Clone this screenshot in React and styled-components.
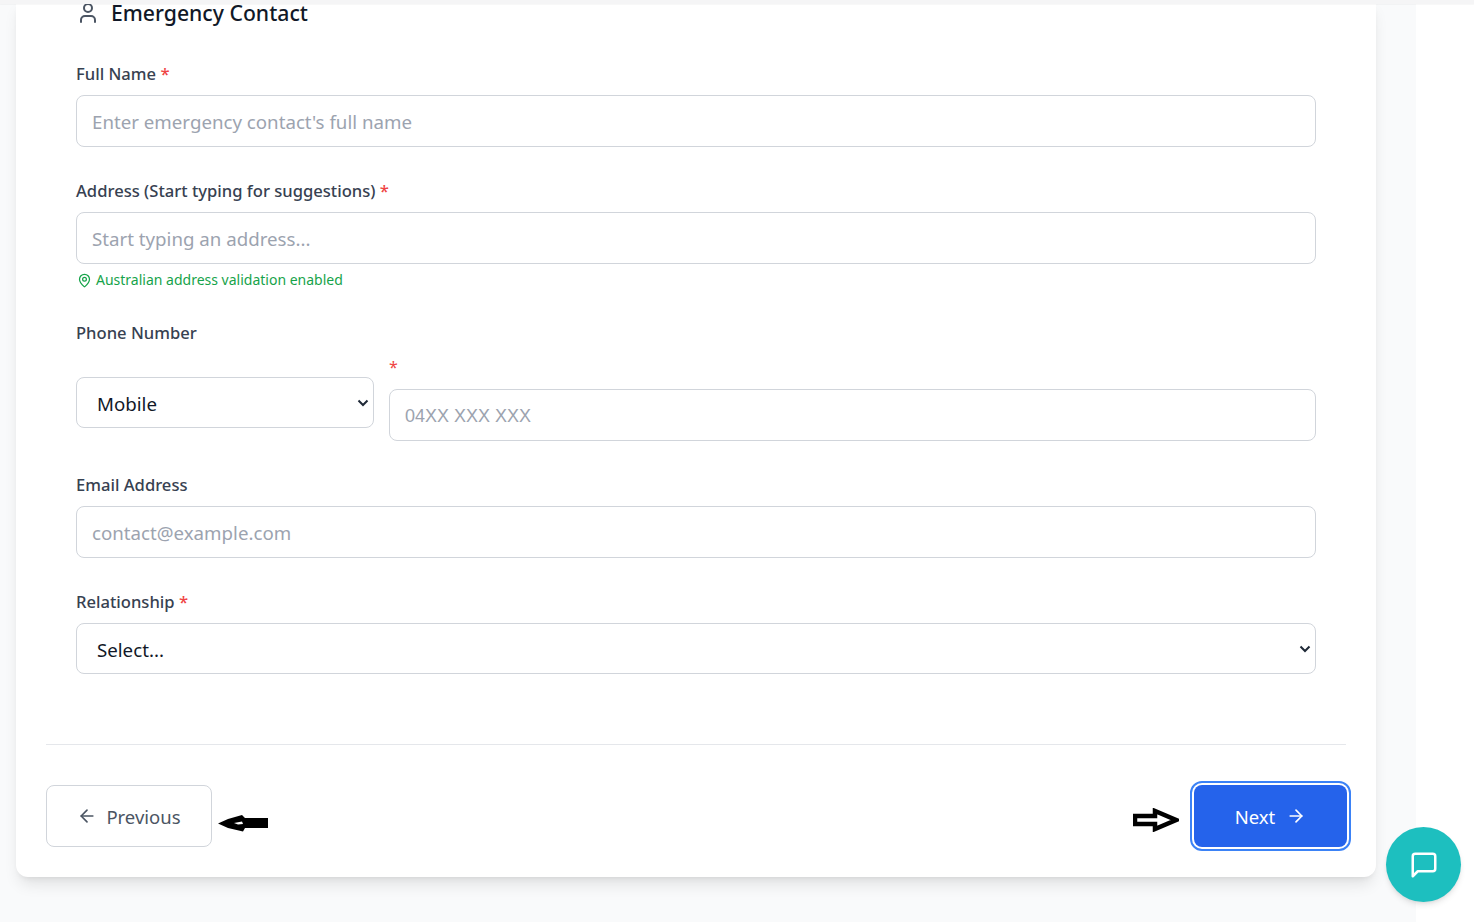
import React from "react";
import styled, { createGlobalStyle } from "styled-components";
import { User, MapPin, ArrowLeft, ArrowRight } from "lucide-react";

const Global = createGlobalStyle`
  html, body { margin: 0; padding: 0; background: #fff; height: 100%; overflow: hidden; }
  * { box-sizing: border-box; }
  body { font-family: "Noto Sans", "Open Sans", sans-serif; }
`;

const Page = styled.div`
  position: relative;
  height: 922px;
  overflow: hidden;
  background: #fff;
`;
const TopStrip = styled.div`
  position: absolute;
  inset: 0 0 auto 0;
  height: 4px;
  background: #f5f5f6;
  box-shadow: 0 1px 1px rgba(0, 0, 0, 0.03);
  z-index: 2;
`;
const Main = styled.main`
  width: 1416px;
  height: 100%;
  background: #f9fafb;
  padding: 0 40px 0 16px;
`;
const Card = styled.section`
  background: #fff;
  border-radius: 0 0 12px 12px;
  box-shadow: 0 10px 15px -3px rgba(0, 0, 0, 0.1), 0 4px 6px -4px rgba(0, 0, 0, 0.1);
  padding: 0 30px 30px;
  height: 877px;
`;
const FormBody = styled.div`
  padding: 0 30px;
`;
const Title = styled.h2`
  display: flex;
  align-items: center;
  gap: 11px;
  height: 26px;
  margin: 0 0 36px;
  color: #111827;
  font-size: 21.2px;
  font-weight: 500;
  line-height: 26px;
`;
const Field = styled.div`
  margin-bottom: ${(p) => p.$mb ?? 32}px;
`;
const Label = styled.label`
  display: block;
  color: #374151;
  font-size: 16.6px;
  font-weight: 500;
  line-height: 24px;
  margin-bottom: ${(p) => p.$mb ?? 9}px;
`;
const Star = styled.span`
  color: #ef4444;
`;
const TextInput = styled.input`
  display: block;
  width: 100%;
  height: 52px;
  border: 1px solid #d1d5db;
  border-radius: 8px;
  padding: ${(p) => (p.$arial ? "3px 15px 0" : "0 15px")};
  font-family: ${(p) => (p.$arial ? '"Liberation Sans", Arial, sans-serif' : "inherit")};
  font-size: ${(p) => (p.$arial ? 18 : 18.7)}px;
  color: #111827;
  background: #fff;
  outline: none;
  &::placeholder { color: #9ca3af; opacity: 1; }
`;
const chevron =
  "url(\"data:image/svg+xml,%3Csvg xmlns='http://www.w3.org/2000/svg' width='12' height='8' viewBox='0 0 12 8'%3E%3Cpath d='M1.5 1.5 6 6l4.5-4.5' fill='none' stroke='%231f2937' stroke-width='2'/%3E%3C/svg%3E\")";
const Select = styled.select`
  display: block;
  width: ${(p) => p.$w || "100%"};
  height: 51px;
  margin-bottom: ${(p) => p.$mb ?? 0}px;
  border: 1px solid #d1d5db;
  border-radius: 8px;
  padding: 2px 20px 0;
  font: inherit;
  font-size: 18.7px;
  color: #111827;
  appearance: none;
  background: #fff ${chevron} no-repeat right 4px center;
`;
const Hint = styled.div`
  display: flex;
  align-items: center;
  gap: 4px;
  margin-top: 6px;
  color: #16a34a;
  font-size: 14px;
  line-height: 20px;
  padding-left: 1px;
`;
const PhoneRow = styled.div`
  display: flex;
  align-items: flex-end;
  gap: 15px;
`;
const PhoneCol = styled.div`
  flex: 1;
`;
const StarLine = styled.div`
  height: 24px;
  line-height: 24px;
  font-size: 16px;
  margin-bottom: 10px;
`;
const Footer = styled.footer`
  position: relative;
  display: flex;
  justify-content: space-between;
  margin-top: 70px;
  padding-top: 40px;
  border-top: 1px solid #e5e7eb;
`;
const PrevButton = styled.button`
  display: flex;
  align-items: center;
  gap: 9px;
  width: 166px;
  height: 62px;
  justify-content: center;
  border: 1px solid #d1d5db;
  border-radius: 8px;
  background: #fff;
  color: #4b5563;
  font: inherit;
  font-size: 18.5px;
`;
const NextButton = styled.button`
  display: flex;
  align-items: center;
  justify-content: center;
  gap: 11px;
  width: 153px;
  height: 62px;
  margin-right: -1px;
  border: 0;
  border-radius: 8px;
  background: #2563eb;
  color: #fff;
  font: inherit;
  font-size: 18.5px;
  outline: 2px solid #3b82f6;
  outline-offset: 2px;
`;
const Mark = styled.svg`
  position: absolute;
  left: ${(p) => p.$x}px;
  top: ${(p) => p.$y}px;
`;
const ChatButton = styled.button`
  position: absolute;
  left: 1386px;
  top: 827px;
  width: 75px;
  height: 75px;
  border: 0;
  border-radius: 50%;
  background: #1dbfbf;
  color: #fff;
  display: flex;
  align-items: center;
  justify-content: center;
  box-shadow: 0 4px 6px -1px rgba(0, 0, 0, 0.1), 0 2px 4px -2px rgba(0, 0, 0, 0.1);
`;

export default function App() {
  return (
    <Page>
      <Global />
      <TopStrip />
      <Main>
        <Card>
          <FormBody>
            <Title>
              <User size={24} color="#4b5563" strokeWidth={2} />
              Emergency Contact
            </Title>
            <Field>
              <Label>Full Name <Star>*</Star></Label>
              <TextInput placeholder="Enter emergency contact's full name" />
            </Field>
            <Field $mb={31}>
              <Label>Address (Start typing for suggestions) <Star>*</Star></Label>
              <TextInput placeholder="Start typing an address..." />
              <Hint><MapPin size={15} />Australian address validation enabled</Hint>
            </Field>
            <Field>
              <Label $mb={10}>Phone Number</Label>
              <PhoneRow>
                <Select $w="298px" $mb={13} defaultValue="Mobile">
                  <option>Mobile</option>
                </Select>
                <PhoneCol>
                  <StarLine><Star>*</Star></StarLine>
                  <TextInput $arial placeholder="04XX XXX XXX" />
                </PhoneCol>
              </PhoneRow>
            </Field>
            <Field>
              <Label>Email Address</Label>
              <TextInput placeholder="contact@example.com" />
            </Field>
            <Field $mb={0}>
              <Label>Relationship <Star>*</Star></Label>
              <Select defaultValue="Select...">
                <option>Select...</option>
              </Select>
            </Field>
          </FormBody>
          <Footer>
            <PrevButton><ArrowLeft size={20} />Previous</PrevButton>
            <Mark $x={172} $y={70} width="50" height="17" viewBox="0 0 50 17">
              <path d="M0 8.5 L10 4 L24 0 L27 3 L50 3 L50 13 L27 13 L25 16.5 L10 13 Z" fill="#000" />
              <path d="M16 8 L24 6.5 L25 9 L20 9.5 Z" fill="#fff" />
            </Mark>
            <Mark $x={1087} $y={63} width="46" height="24" viewBox="0 0 46 24">
              <path d="M2 8 H22 V3 L43 12 L22 21 V16 H2 Z" fill="#fff" stroke="#000" strokeWidth="4.5" />
            </Mark>
            <NextButton>Next<ArrowRight size={20} /></NextButton>
          </Footer>
        </Card>
      </Main>
      <ChatButton>
        <svg width="30" height="30" viewBox="0 0 24 24" fill="none" stroke="currentColor" strokeWidth="2" strokeLinejoin="round" strokeLinecap="round">
          <path d="M21 15a2 2 0 0 1-2 2H7l-4 4V5a2 2 0 0 1 2-2h14a2 2 0 0 1 2 2z" />
        </svg>
      </ChatButton>
    </Page>
  );
}
